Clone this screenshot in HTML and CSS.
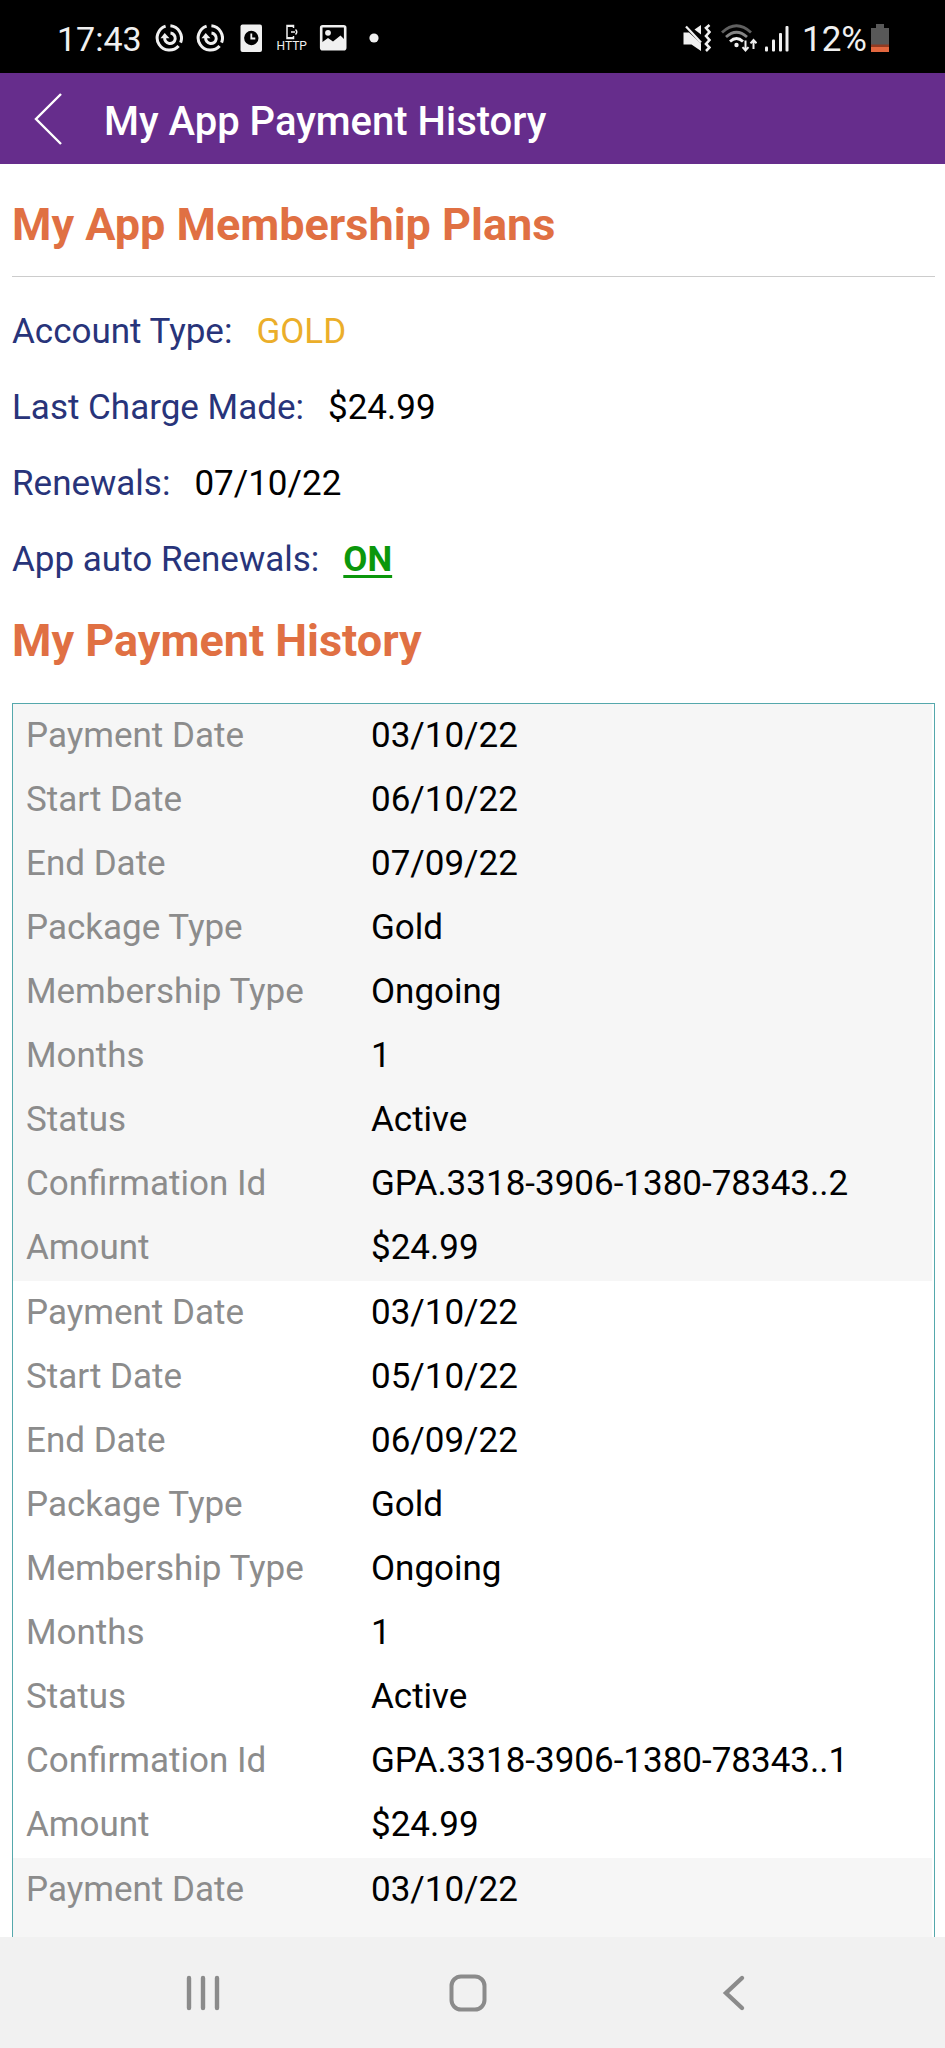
FILE: index.html
```html
<!DOCTYPE html>
<html lang="en">
<head>
<meta charset="utf-8">
<meta name="viewport" content="width=device-width, initial-scale=1">
<title>My App Payment History</title>
<link rel="stylesheet" href="styles.css">
</head>
<body>
<div class="status-bar">
  <div class="status-left">
    <span class="clock">17:43</span>
    <svg class="status-icon" viewBox="0 0 28 28" fill="none" stroke="#f0f0f0" stroke-width="3">
      <path d="M10.6 2.1A12.3 12.3 0 1 0 23.6 22"/>
      <path d="M15.4 1.8A12.3 12.3 0 0 1 25.6 18.6"/>
      <path d="M15.5 9A5.300 5.300 0 1 1 9.700 13.500"/>
      <path d="M5.500 14.200L9.700 9l4.800 5.200z" fill="#f0f0f0" stroke="none"/>
    </svg>
    <svg class="status-icon" viewBox="0 0 28 28" fill="none" stroke="#f0f0f0" stroke-width="3">
      <path d="M10.6 2.1A12.3 12.3 0 1 0 23.6 22"/>
      <path d="M15.4 1.8A12.3 12.3 0 0 1 25.6 18.6"/>
      <path d="M15.5 9A5.300 5.300 0 1 1 9.700 13.500"/>
      <path d="M5.500 14.200L9.700 9l4.800 5.200z" fill="#f0f0f0" stroke="none"/>
    </svg>
    <svg class="status-icon" viewBox="0 0 28 28">
      <rect x="3.5" y="0.5" width="21.5" height="27.5" rx="2" fill="#f0f0f0"/>
      <circle cx="14.3" cy="14" r="7.2" fill="#000"/>
      <path d="M14.3 9.5v5h4" fill="none" stroke="#f0f0f0" stroke-width="1.8"/>
    </svg>
    <span class="http">
      <svg class="http-icon" viewBox="0 0 14 16" fill="none" stroke="#f0f0f0" stroke-width="1.5">
        <path d="M8.5 4V1.5H2v13h6.500V12"/>
        <path d="M2 2h6.500M2 14h6.500" stroke-width="2"/>
        <path d="M6 8h4M10.500 5.500q2.500 2.500 0 5"/>
      </svg>
      <span>HTTP</span>
    </span>
    <svg class="status-icon" viewBox="0 0 28 28">
      <rect x="2.200" y="2.200" width="24" height="23" rx="1.500" fill="none" stroke="#f0f0f0" stroke-width="2.600"/>
      <circle cx="9" cy="8.800" r="2.900" fill="#f0f0f0"/>
      <path d="M2 19l7-5 5 3.500 7.500-6 5 5V25H2z" fill="#f0f0f0"/>
    </svg>
    <svg class="status-icon" viewBox="0 0 28 28"><circle cx="14" cy="14" r="4.600" fill="#f0f0f0"/></svg>
  </div>
  <div class="status-right">
    <svg class="mute" viewBox="0 0 28 28" fill="#f0f0f0">
      <path d="M.5 8.500H6L18 19.500V27L8.500 20.500H.5z"/>
      <path d="M11.500 5.500L18 1v9.500z"/>
      <path d="M3 2.500L18 18.500" stroke="#f0f0f0" stroke-width="2.200"/>
      <path d="M26.500 1l-3.500 3 3.500 4-3.500 4 3.500 4-3.500 4 3.500 3.500-3.500 3.500" fill="none" stroke="#f0f0f0" stroke-width="2.600"/>
    </svg>
    <svg class="wifi" viewBox="0 0 36 28" fill="none" stroke-width="2.800">
      <path d="M1 8.500Q15.500-5 30 8.500" stroke="#606060"/>
      <path d="M5 13Q15.500 3.500 26 13" stroke="#858585"/>
      <path d="M9 17.500q6.500-6 13 0" stroke="#f0f0f0"/>
      <circle cx="15.500" cy="21" r="2.200" fill="#f0f0f0"/>
      <path d="M24.500 16.500v10M21.500 23.200l3 3.300 3-3.300M32.500 25V16M29.500 19.300l3-3.300 3 3.300" stroke="#f0f0f0" stroke-width="2"/>
    </svg>
    <svg class="signal" viewBox="0 0 26 28" fill="#f0f0f0">
      <rect x="1" y="22.500" width="3" height="5" rx="1"/><rect x="8" y="15.500" width="3" height="12" rx="1"/><rect x="15" y="9" width="3" height="18.500" rx="1"/><rect x="21.500" y="2" width="3" height="25.500" rx="1"/>
    </svg>
    <span class="percent">12%</span>
    <svg class="battery" viewBox="0 0 18 28">
      <path d="M0 4h5V0h8v4h5v18H0z" fill="#585858"/><path d="M0 20.500h18V23H0z" fill="#913b22"/><path d="M0 23h18v5H0z" fill="#e2673f"/>
    </svg>
  </div>
</div>
<header class="app-bar">
  <button class="back" aria-label="Back">
    <svg class="back-icon" viewBox="0 0 28 52" fill="none" stroke="#fff" stroke-width="2.400"><path d="M27 1L2 26l25 25"/></svg>
  </button>
  <h1 class="app-title">My App Payment History</h1>
</header>
<main class="content">
  <h2 class="heading heading-plans">My App Membership Plans</h2>
  <dl class="plan">
    <div class="plan-row"><dt>Account Type:</dt><dd class="gold">GOLD</dd></div>
    <div class="plan-row"><dt>Last Charge Made:</dt><dd>$24.99</dd></div>
    <div class="plan-row"><dt>Renewals:</dt><dd>07/10/22</dd></div>
    <div class="plan-row"><dt>App auto Renewals:</dt><dd><a class="toggle" href="#">ON</a></dd></div>
  </dl>
  <h2 class="heading heading-history">My Payment History</h2>
  <div class="history">
    <dl class="payment">
      <dt>Payment Date</dt><dd>03/10/22</dd>
      <dt>Start Date</dt><dd>06/10/22</dd>
      <dt>End Date</dt><dd>07/09/22</dd>
      <dt>Package Type</dt><dd>Gold</dd>
      <dt>Membership Type</dt><dd>Ongoing</dd>
      <dt>Months</dt><dd>1</dd>
      <dt>Status</dt><dd>Active</dd>
      <dt>Confirmation Id</dt><dd>GPA.3318-3906-1380-78343..2</dd>
      <dt>Amount</dt><dd>$24.99</dd>
    </dl>
    <dl class="payment">
      <dt>Payment Date</dt><dd>03/10/22</dd>
      <dt>Start Date</dt><dd>05/10/22</dd>
      <dt>End Date</dt><dd>06/09/22</dd>
      <dt>Package Type</dt><dd>Gold</dd>
      <dt>Membership Type</dt><dd>Ongoing</dd>
      <dt>Months</dt><dd>1</dd>
      <dt>Status</dt><dd>Active</dd>
      <dt>Confirmation Id</dt><dd>GPA.3318-3906-1380-78343..1</dd>
      <dt>Amount</dt><dd>$24.99</dd>
    </dl>
    <dl class="payment">
      <dt>Payment Date</dt><dd>03/10/22</dd>
    </dl>
  </div>
</main>
<nav class="nav-bar" aria-label="System">
  <button class="nav-button" aria-label="Recent apps">
    <svg class="nav-icon" viewBox="0 0 40 40" stroke="#8b8b8b" stroke-width="4.400" stroke-linecap="round"><path d="M6 5v30M20 5v30M34 5v30"/></svg>
  </button>
  <button class="nav-button" aria-label="Home">
    <svg class="nav-icon" viewBox="0 0 40 40" fill="none" stroke="#8b8b8b" stroke-width="4"><rect x="3.500" y="3.500" width="33" height="33" rx="9.500"/></svg>
  </button>
  <button class="nav-button" aria-label="Back">
    <svg class="nav-icon" viewBox="0 0 40 40" fill="none" stroke="#8b8b8b" stroke-width="4.400" stroke-linecap="round"><path d="M28 5L12 20l16 15"/></svg>
  </button>
</nav>
</body>
</html>
```
FILE: styles.css
```css
* { box-sizing: border-box; }

body {
  margin: 0;
  height: 100vh;
  display: flex;
  flex-direction: column;
  background: #fff;
  color: #000;
  font-family: Roboto, "Liberation Sans", sans-serif;
  font-size: 35px;
}

h1, h2, dl, dd { margin: 0; }
svg { display: block; flex: none; }

button {
  padding: 0;
  border: 0;
  background: none;
  display: flex;
  align-items: center;
  justify-content: center;
}

.status-bar {
  flex: none;
  height: 73px;
  padding: 2px 56px 0 57px;
  display: flex;
  align-items: center;
  justify-content: space-between;
  background: #000;
  color: #f0f0f0;
}

.status-left { display: flex; align-items: center; gap: 13px; }
.status-right { display: flex; align-items: center; }
.status-icon { width: 28px; height: 28px; }
.clock, .percent { padding-top: 3px; }
.clock { font-size: 34px; }

.http {
  width: 28px;
  display: flex;
  flex-direction: column;
  align-items: center;
  font-size: 12px;
  line-height: 12px;
}
.http-icon { width: 14px; height: 16px; }

.mute { width: 28px; height: 28px; margin-right: 10px; }
.wifi { width: 36px; height: 28px; margin-right: 7px; }
.signal { width: 26px; height: 28px; margin-right: 12px; }
.battery { width: 18px; height: 28px; margin-left: 4px; }

.app-bar {
  flex: none;
  height: 91px;
  display: flex;
  align-items: center;
  background: #662d8c;
  color: #fff;
}
.back { width: 104px; height: 91px; padding-right: 8px; }
.back-icon { width: 28px; height: 52px; }
.app-title { padding-top: 6px; font-size: 40px; font-weight: 500; }

.content {
  flex: 1;
  min-height: 0;
  overflow: hidden;
  padding: 0 10px 0 12px;
}

.heading {
  color: #e07043;
  font-size: 45px;
  font-weight: 700;
}
.heading-plans {
  line-height: 64px;
  padding: 29px 0 19px;
  border-bottom: 1px solid #ccc;
}
.heading-history { line-height: 64px; padding: 11px 0 30px; }

.plan { padding-top: 17px; }
.plan-row { display: flex; gap: 24px; line-height: 76px; }
.plan dt { color: #28347a; }
.gold { color: #ebae2a; }
.toggle { color: #0b970b; font-weight: 700; text-underline-offset: 4px; }

.history { border: 1px solid #55a8ac; }
.payment {
  display: grid;
  grid-template-columns: 345px 1fr;
  margin-right: 2px;
  padding: 0 0 1px 13px;
  line-height: 64px;
}
.payment:nth-child(odd) { background: #f6f6f6; }
.payment:last-child { padding-bottom: 64px; }
.payment dt { color: #8c8c8c; }

.nav-bar {
  flex: none;
  height: 111px;
  padding: 0 78px 0 70px;
  display: grid;
  grid-template-columns: repeat(3, 1fr);
  background: #f1f1f1;
}
.nav-icon { width: 40px; height: 40px; }
```
